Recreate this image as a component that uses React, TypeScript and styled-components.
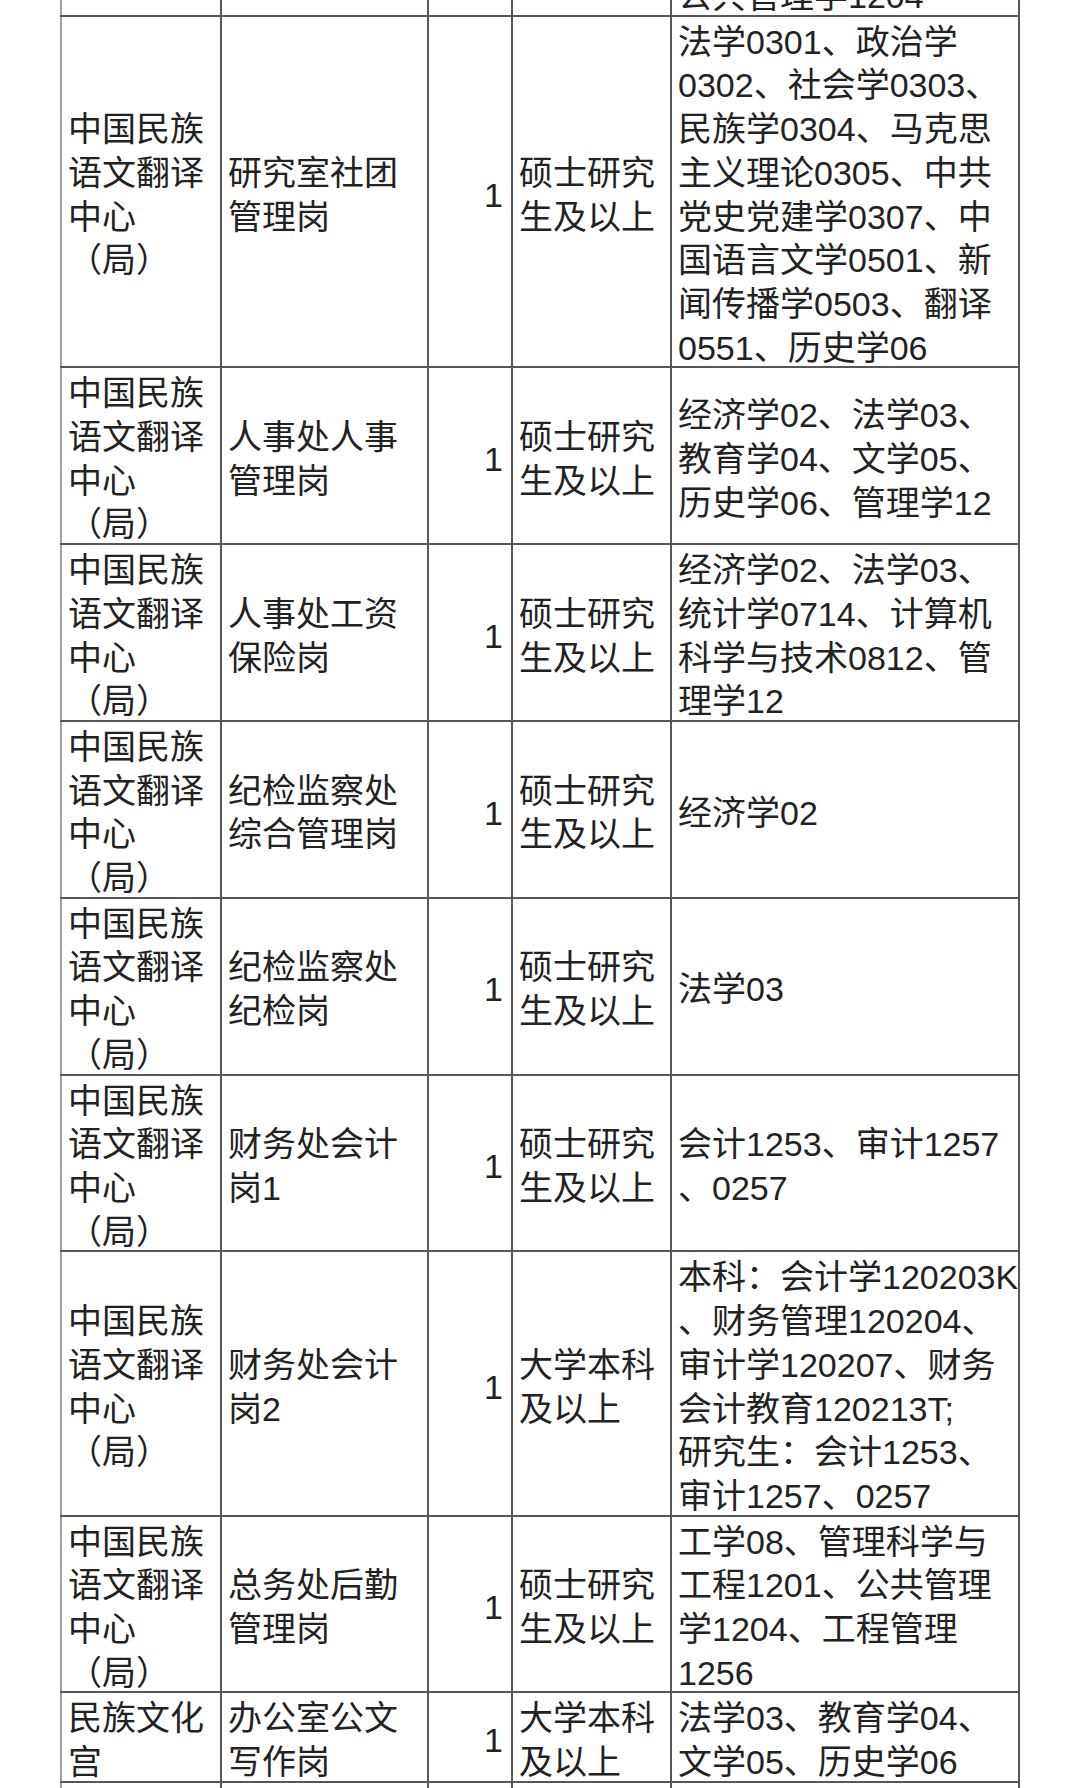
import React from "react";
import styled, { createGlobalStyle } from "styled-components";

const GlobalStyle = createGlobalStyle`
  html, body {
    margin: 0;
    padding: 0;
    background: #ffffff;
  }
`;

type Row = {
  unit: string[];
  post: string[];
  count: string;
  degree: string[];
  majors: string[];
};

const center = ["中国民族", "语文翻译", "中心", "（局）"];
const master = ["硕士研究", "生及以上"];
const bachelor = ["大学本科", "及以上"];

const rows: Row[] = [
  {
    unit: center,
    post: ["研究室社团", "管理岗"],
    count: "1",
    degree: master,
    majors: [
      "法学0301、政治学",
      "0302、社会学0303、",
      "民族学0304、马克思",
      "主义理论0305、中共",
      "党史党建学0307、中",
      "国语言文学0501、新",
      "闻传播学0503、翻译",
      "0551、历史学06",
    ],
  },
  {
    unit: center,
    post: ["人事处人事", "管理岗"],
    count: "1",
    degree: master,
    majors: ["经济学02、法学03、", "教育学04、文学05、", "历史学06、管理学12"],
  },
  {
    unit: center,
    post: ["人事处工资", "保险岗"],
    count: "1",
    degree: master,
    majors: [
      "经济学02、法学03、",
      "统计学0714、计算机",
      "科学与技术0812、管",
      "理学12",
    ],
  },
  {
    unit: center,
    post: ["纪检监察处", "综合管理岗"],
    count: "1",
    degree: master,
    majors: ["经济学02"],
  },
  {
    unit: center,
    post: ["纪检监察处", "纪检岗"],
    count: "1",
    degree: master,
    majors: ["法学03"],
  },
  {
    unit: center,
    post: ["财务处会计", "岗1"],
    count: "1",
    degree: master,
    majors: ["会计1253、审计1257", "、0257"],
  },
  {
    unit: center,
    post: ["财务处会计", "岗2"],
    count: "1",
    degree: bachelor,
    majors: [
      "本科：会计学120203K",
      "、财务管理120204、",
      "审计学120207、财务",
      "会计教育120213T;",
      "研究生：会计1253、",
      "审计1257、0257",
    ],
  },
  {
    unit: center,
    post: ["总务处后勤", "管理岗"],
    count: "1",
    degree: master,
    majors: [
      "工学08、管理科学与",
      "工程1201、公共管理",
      "学1204、工程管理",
      "1256",
    ],
  },
  {
    unit: ["民族文化", "宫"],
    post: ["办公室公文", "写作岗"],
    count: "1",
    degree: bachelor,
    majors: ["法学03、教育学04、", "文学05、历史学06"],
  },
];

const Viewport = styled.div`
  height: 1788px;
  overflow: hidden;
  padding-left: 60px;
  box-sizing: border-box;
`;

const Sheet = styled.table`
  margin-top: -31px;
  border-collapse: collapse;
  table-layout: fixed;
  width: 958px;
  font-family: "Liberation Sans", "Noto Sans CJK SC", sans-serif;
  font-size: 34px;
  line-height: 43.7px;
  color: #222222;
`;

const Cell = styled.td<{ $right?: boolean; $first?: boolean }>`
  border: 2px solid #575757;
  border-left-color: ${({ $first }) => ($first ? "#a0a0a0" : "#575757")};
  padding: 0 ${({ $right }) => ($right ? "8px" : "4px")} 0 6px;
  vertical-align: middle;
  text-align: ${({ $right }) => ($right ? "right" : "left")};
  overflow: hidden;
`;

const FillerCell = styled(Cell)`
  height: 44px;
`;

// the sheet sets its text a few pixels below the line centre;
// the padding pushes it down while the negative margin keeps the row height
const CellText = styled.div`
  padding-top: 4px;
  margin-bottom: -4px;
`;

const Line = styled.span`
  display: block;
  white-space: nowrap;
`;

const Lines: React.FC<{ items: string[] }> = ({ items }) => (
  <CellText>
    {items.map((t, i) => (
      <Line key={i}>{t}</Line>
    ))}
  </CellText>
);

export default function App() {
  return (
    <>
      <GlobalStyle />
      <Viewport>
        <Sheet>
          <colgroup>
            <col style={{ width: 160 }} />
            <col style={{ width: 207 }} />
            <col style={{ width: 84 }} />
            <col style={{ width: 159 }} />
            <col style={{ width: 348 }} />
          </colgroup>
          <tbody>
            <tr>
              <Cell $first />
              <Cell />
              <Cell $right />
              <Cell />
              <Cell>
                <Lines items={["公共管理学1204"]} />
              </Cell>
            </tr>
            {rows.map((r, i) => (
              <tr key={i}>
                <Cell $first>
                  <Lines items={r.unit} />
                </Cell>
                <Cell>
                  <Lines items={r.post} />
                </Cell>
                <Cell $right>
                  <Lines items={[r.count]} />
                </Cell>
                <Cell>
                  <Lines items={r.degree} />
                </Cell>
                <Cell>
                  <Lines items={r.majors} />
                </Cell>
              </tr>
            ))}
            <tr>
              <FillerCell $first />
              <FillerCell />
              <FillerCell $right />
              <FillerCell />
              <FillerCell />
            </tr>
          </tbody>
        </Sheet>
      </Viewport>
    </>
  );
}
